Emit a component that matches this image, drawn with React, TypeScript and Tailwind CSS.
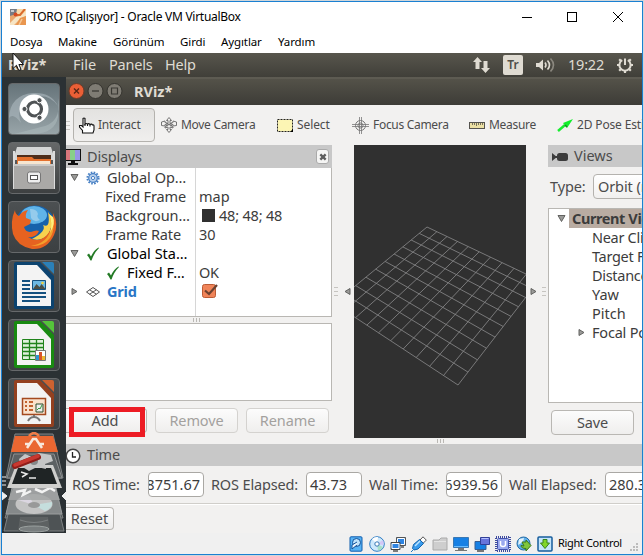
import type { ReactNode } from "react";

const UI = "font-['Noto_Sans','Open_Sans',sans-serif]";

/* ---------- small helpers ---------- */

function Label({ className = "", children }: { className?: string; children: ReactNode }) {
  return <span className={`block shrink-0 whitespace-nowrap ${className}`}>{children}</span>;
}

function PushButton({ className = "", disabled, children }: { className?: string; disabled?: boolean; children: ReactNode }) {
  return (
    <button
      className={`flex shrink-0 items-center justify-center rounded-[4px] border bg-linear-to-b from-[#fcfcfc] to-[#efeeed] text-[14.5px] ${
        disabled ? "border-[#d4d2cf] text-[#a3a19e]" : "border-[#b9b7b3] text-[#4c4c4c]"
      } ${className}`}
    >
      {children}
    </button>
  );
}

function Arrow({ dir, className = "" }: { dir: "down" | "right" | "left"; className?: string }) {
  const pts = dir === "down" ? "1,1.5 8,1.5 4.5,7.5" : dir === "right" ? "2,1.5 7,4.5 2,7.5" : "7,1.5 2,4.5 7,7.5";
  return (
    <svg width="9" height="9" viewBox="0 0 9 9" className={`shrink-0 ${className}`}>
      <polygon points={pts} fill="#9a9a98" stroke="#626260" strokeWidth="1" />
    </svg>
  );
}

function Grip({ vertical }: { vertical?: boolean }) {
  return (
    <div className={vertical ? "flex flex-col gap-[3px]" : "flex gap-[2px]"}>
      {[0, 1, 2].map((i) => (
        <span key={i} className={vertical ? "h-px w-[4px] bg-[#c6c4c0]" : "h-[4px] w-px bg-[#bab8b4]"} />
      ))}
    </div>
  );
}

/* ---------- host window ---------- */

function TitleBar() {
  return (
    <div className="flex h-[29px] shrink-0 items-center bg-white pl-[8px] text-[12px] text-black">
      <svg width="16" height="16" viewBox="0 0 16 16" className="shrink-0">
        <rect width="16" height="16" fill="#e9a76d" />
        <path d="M0 0h8L6 5 0 7z" fill="#777c84" />
        <path d="M1 1h3v2H1z" fill="#c9ccd0" />
        <path d="M7 0h9v5l-5 4-5-3z" fill="#f8d9a8" />
        <path d="M16 2 11 7 6 8 0 14v2h4l6-6 6-3z" fill="#f6e5c5" />
        <path d="M15 0 10 6H5" stroke="#db6b2c" strokeWidth="2" fill="none" />
        <circle cx="5.500" cy="5.500" r="2" fill="#d24a22" />
        <path d="M6 16l4-7 6-2v9z" fill="#e9964f" />
        <path d="M9 16l3-6" stroke="#f4c896" strokeWidth="1.500" />
      </svg>
      <Label className="ml-[5px] w-[400px] grow tracking-[-0.27px]">TORO [Çalışıyor] - Oracle VM VirtualBox</Label>
      <svg width="104" height="12" viewBox="0 0 104 12" className="mr-[17px] shrink-0" fill="none" stroke="#000" strokeWidth="1">
        <path d="M1 6.500h10M46.500 1.500h9v9h-9z" shapeRendering="crispEdges" />
        <path d="M92 1l10 10M102 1 92 11" />
      </svg>
    </div>
  );
}

function MenuBar() {
  return (
    <div className="flex h-[22px] shrink-0 items-center bg-white pl-[8px] text-[11.5px] tracking-[-0.1px] text-black">
      <Label className="w-[48px]">Dosya</Label>
      <Label className="w-[55px]">Makine</Label>
      <Label className="w-[67px]">Görünüm</Label>
      <Label className="w-[41px]">Girdi</Label>
      <Label className="w-[57px]">Aygıtlar</Label>
      <Label>Yardım</Label>
    </div>
  );
}

function Gear() {
  return (
    <svg width="18" height="18" viewBox="0 0 18 18" fill="none" stroke="#dfdbd2" className="shrink-0">
      <path d="M6.200 4.200A5.600 5.600 0 1 0 11.800 4.200" strokeWidth="2" />
      <path d="M9 2.500v6.500" strokeWidth="2" />
      <path d="M1 9h2.500M14.500 9H17M9 14.500V17M3.200 3.200l2 2M14.800 3.200l-2 2M3.200 14.800l2-2M14.800 14.800l-2-2" strokeWidth="2.200" />
    </svg>
  );
}

function GuestPanel() {
  return (
    <div className="relative flex h-[24px] shrink-0 items-center bg-linear-to-b from-[#58564d] to-[#403f39] pl-[6px] text-[14.5px] text-[#dfdbd2]">
      <Label className="w-[65px] font-bold">RViz*</Label>
      <Label className="w-[36px]">File</Label>
      <Label className="w-[56px] tracking-[-0.2px]">Panels</Label>
      <Label className="grow tracking-[-0.2px]">Help</Label>
      <svg width="19" height="18" viewBox="0 0 19 18" className="shrink-0" fill="#dfdbd2">
        <path d="M5.500 1 10 6H7.500v7h-4V6H1z" />
        <path d="M13.500 17 18 12h-2.500V5h-4v7H9z" />
      </svg>
      <span className="ml-[12px] flex h-[20px] w-[20px] items-center justify-center rounded-[2px] bg-[#dfdbd2] text-[12px] font-semibold text-[#504e47]">Tr</span>
      <svg width="20" height="16" viewBox="0 0 20 16" className="ml-[12px] shrink-0" fill="none" stroke="#dfdbd2" strokeWidth="1.600">
        <path d="M1 6h3l4-3.500v11L4 10H1z" fill="#dfdbd2" stroke="none" />
        <path d="M10 5.500q2 2.500 0 5" />
        <path d="M12.500 3.500q4 4.500 0 9" />
        <path d="M15.500 1.500q6 6.500 0 13" stroke="#8b887f" />
      </svg>
      <Label className="ml-[13px] w-[48px] tracking-[-0.2px]">19:22</Label>
      <Gear />
      <span className="w-[8px]" />
      <svg width="14" height="20" viewBox="0 0 14 20" className="absolute top-0 left-[9px]">
        <path d="M2 0v15.500l3.500-3.200 2.300 5.200 2.300-1-2.200-5h4.600z" fill="#fff" stroke="#111" strokeWidth="1" />
      </svg>
    </div>
  );
}

/* ---------- launcher ---------- */

function Tile({ className = "from-[#4c5052] to-[#3c4042]", children }: { className?: string; children: ReactNode }) {
  return (
    <div className={`flex h-[52px] w-[52px] shrink-0 overflow-hidden rounded-[4px] border border-[#66696b] bg-linear-to-b ${className}`}>
      <svg width="50" height="50" viewBox="1 1 50 50">
        {children}
      </svg>
    </div>
  );
}

function OfficePage({ color, fold, children }: { color: string; fold: string; children: ReactNode }) {
  return (
    <>
      <path d="M8 2h24l14 14v31q0 2-2 2H8q-2 0-2-2V4q0-2 2-2z" fill={color} />
      <path d="M34 2h10q2 0 2 2v10z" fill={fold} />
      <path d="M9 5h20l14 15v26H9z" fill="#f3f3f3" />
      {children}
    </>
  );
}

function Launcher() {
  return (
    <div className="flex h-[456px] w-[64px] shrink-0 flex-col items-center gap-[7px] overflow-hidden bg-[#2b3134] pt-[6px]">
      <Tile className="from-[#66747a] to-[#98a4a8]">
        <path d="M1 35Q2 12 25 10 43 9 50 23 39 8 22 16 7 23 13 40 5 29 1 35Z" fill="#a9b6bb" opacity=".65" />
        <path d="M50 15Q54 40 33 44 18 48 6 51H26Q47 50 50 34Z" fill="#a7b3b6" opacity=".7" />
        <circle cx="26" cy="26" r="14.500" fill="#fff" />
        <circle cx="26.500" cy="26" r="7" fill="none" stroke="#4f5355" strokeWidth="3.200" />
        <g fill="#4f5355" stroke="#fff" strokeWidth="1">
          <circle cx="16.500" cy="26" r="2.600" />
          <circle cx="31.500" cy="17.300" r="2.600" />
          <circle cx="31.500" cy="34.700" r="2.600" />
        </g>
      </Tile>
      <Tile className="from-[#666869] to-[#3d4041]">
        <path d="M9 5h34l4 13H5z" fill="#d5d6d6" />
        <path d="M9 13h34v12H9z" fill="#4f2d1a" />
        <path d="M9 15h15l2 2h17v6H9z" fill="#e4702d" />
        <path d="M10 19h32v5H10z" fill="#f6e5cf" />
        <path d="M5 9h2v38H5zM45 9h2v38h-2z" fill="#dcdcdc" />
        <path d="M6 22h40v25H6z" fill="#aaa9a7" />
        <path d="M6 22h40v2H6z" fill="#c9c8c6" />
        <rect x="19.500" y="30" width="13" height="11" rx="2" fill="#eee" stroke="#777" />
        <rect x="22.500" y="33.500" width="7" height="4" fill="#fff" stroke="#555" />
      </Tile>
      <Tile>
        <circle cx="27" cy="25" r="20.500" fill="#1762ab" />
        <ellipse cx="26" cy="14" rx="13" ry="9" fill="#60b4e8" />
        <path d="M22 8q7 0 8 5-2 3 2 6-6 3-9-2z" fill="#b9dbef" opacity=".6" />
        <path d="M40 11Q47 20 41 32 35 41 24 38 39 30 35 24 43 28 40 11Z" fill="#f7d14e" />
        <path d="M7 9q0 4 4 6 3-5 9-6-3 4-2 8l5 2-1 4-6 3q2 7 10 4 3-1 5 0-3 7-11 6 10 7 19-2 7-8 6-22 6 11 1 22-7 15-22 14Q9 45 5 33 2 20 7 9z" fill="#e66220" />
        <path d="M40 11q10 13 2 26-7 9-19 8 17-3 20-18 1-8-3-16z" fill="#f3a12c" />
        <path d="M41 13q4 9 1 19 6-10 3-16z" fill="#fff07b" />
      </Tile>
      <Tile>
        <OfficePage color="#0c436f" fold="#2b80b8">
          <path d="M14 21h8M14 25h8M14 29h8M14 33h24M14 37h24M14 41h18" stroke="#15517f" strokeWidth="2" />
          <path d="M24.500 20.500h13v9h-13z" fill="#6db9e3" stroke="#15517f" />
          <path d="M25 29l3.500-5 3 3 2-3 4 5z" fill="#4b4f45" />
          <circle cx="34.500" cy="23" r="1.300" fill="#f4d13a" />
        </OfficePage>
      </Tile>
      <Tile>
        <OfficePage color="#198a11" fold="#55c33a">
          <path d="M14.500 20.500h21v20h-21z" fill="#dff1dc" stroke="#20841b" />
          <path d="M14 24.500h22M14 28.500h22M14 32.500h22M14 36.500h22M21.500 20v20M28.500 20v20" stroke="#20841b" strokeWidth="1.300" />
          <path d="M27.500 31.500h10v10h-10z" fill="#fff" stroke="#777" />
          <path d="M28 36h3v5h-3z" fill="#2e97cd" />
          <path d="M31 33h3v8h-3z" fill="#d8542a" />
          <path d="M34 37h3v4h-3z" fill="#eeb832" />
        </OfficePage>
      </Tile>
      <Tile>
        <OfficePage color="#93401f" fold="#ce6230">
          <path d="M14.500 20.500h23v16h-23z" fill="#fae1cc" stroke="#a4491f" strokeWidth="1.500" />
          <path d="M17 24h2M17 28h2M17 32h2M21 24h4M21 28h4M21 32h4" stroke="#c2622e" strokeWidth="2" />
          <path d="M28 26h7v8h-7z" fill="#eee" stroke="#2b4a2b" />
          <path d="M29 32l2-2 1 1 2-4" stroke="#379c40" fill="none" />
          <path d="M26 37v2M20 43q2-4 6-4t6 4" stroke="#777" fill="none" strokeWidth="2" />
        </OfficePage>
      </Tile>
      <svg width="64" height="103" viewBox="0 0 64 103" className="-mt-[5px] shrink-0">
        <g stroke="#7e8283">
          <path d="M13 2h38l10 44H4z" fill="#4a4e50" />
          <path d="M9 66h46l6 20H3z" fill="#53585a" />
          <path d="M9 70h46l7 29H2z" fill="#4e5355" />
        </g>
        <path d="M18 85h28l2 14H16z" fill="#5d6162" />
        <path d="M18 88q14 5 28 0" stroke="#7c8081" fill="none" />
        <ellipse cx="32" cy="97" rx="15" ry="3" fill="#787d7e" stroke="#9ba1a0" />
        <path d="M10 56h44l6 26H4z" fill="#85898a" stroke="#9a9d9e" />
        <ellipse cx="32" cy="72" rx="18.500" ry="10" fill="#c4c4c4" />
        <path d="M32 73l18-3q1 6-7 9z" fill="#c5dedd" />
        <path d="M32 73l-16-5q4-5 11-4z" fill="#dbd6e1" />
        <ellipse cx="32" cy="73" rx="6" ry="3" fill="#999" />
        <path d="M6 68h52l-5-13H12z" fill="#a2a5a5" opacity=".8" />
        <path d="M14 60l9-2-2 5 8-4M33 57l7 3 8-4 5 3" stroke="#f3f3f3" strokeWidth="2.500" fill="none" />
        <path d="M12 22h40l8 24H5z" fill="#5c6163" stroke="#8d9091" />
        <path d="M14 33h37l9 23H5z" fill="#cfcfcd" />
        <path d="M16 36h33l6 16H10z" fill="#1f2425" />
        <path d="M19 40l6 2-5 3M27 46h7" fill="none" stroke="#e8e8e8" strokeWidth="1.500" />
        <path d="M17 27l6-5 7 3 7-4 12 2 2 6-8 3 1 5-9-2-8 4-8-5z" fill="#c5c6c6" />
        <circle cx="32" cy="29" r="4" fill="#85898a" />
        <path d="M13 34l23-9" stroke="#8f1d19" strokeWidth="6" strokeLinecap="round" />
        <path d="M13 33l23-9" stroke="#c83830" strokeWidth="3.500" strokeLinecap="round" />
        <path d="M13 4h38l5 16H9z" fill="#ea6731" />
        <path d="M27 4q5-6 10 0" stroke="#f07d47" strokeWidth="2.500" fill="none" />
        <path d="M25 16l6-9h3l6 9M23 12h5M37 12h5" stroke="#f8e8dc" strokeWidth="2.500" fill="none" />
        <path d="M0 45h4M0 49h4M0 53h4M64 60l-4 4 4 4M0 60l5 4-5 4" fill="#eee" stroke="#eee" />
      </svg>
    </div>
  );
}

/* ---------- rviz ---------- */

function RvizTitle() {
  return (
    <div className="flex h-[28px] shrink-0 items-center border-t-2 border-[#5d5b52] bg-linear-to-b from-[#545249] to-[#3d3c37] pl-[2px]">
      <svg width="58" height="20" viewBox="0 0 58 20" className="shrink-0" fill="none">
        <circle cx="8.500" cy="9" r="7.500" fill="#ea5f36" stroke="#6e3a28" />
        <path d="M6 6.500l5 5M11 6.500l-5 5" stroke="#592616" strokeWidth="1.400" />
        <circle cx="27.500" cy="9" r="7.500" fill="#7f7c74" stroke="#35342f" />
        <path d="M24 9h7" stroke="#3a3934" strokeWidth="1.300" />
        <circle cx="46.500" cy="9" r="7.500" fill="#7f7c74" stroke="#35342f" />
        <path d="M43.500 6h6v6h-6z" stroke="#3a3934" strokeWidth="1.200" />
      </svg>
      <Label className="ml-[8px] text-[14.5px] font-bold text-[#dfdbd2]">RViz*</Label>
    </div>
  );
}

function MoveIcon() {
  return (
    <svg width="16" height="16" viewBox="0 0 16 16" className="shrink-0" fill="#f2f1f0" stroke="#666" strokeWidth=".9">
      <path d="M8 .5l2.500 3H9v3l3-1V4l3.500 1v3.500L12 9V7.500L9.500 8 12 10v1L9 10v2.500h1.500L8 15.500l-2.500-3H7V10l-3 1v-1l2.500-2L4 7.500V9L.5 8.500V5L4 4v1.500l3 1v-3H5.500z" />
      <path d="M5 6l6 3M11 6 5 9" />
    </svg>
  );
}

function FocusIcon() {
  return (
    <svg width="17" height="17" viewBox="0 0 17 17" className="shrink-0" fill="none" stroke="#777" strokeWidth="1">
      <circle cx="8.500" cy="8.500" r="5" />
      <circle cx="8.500" cy="8.500" r="2.500" />
      <path d="M7.500 0v17M9.500 0v17M0 7.500h17M0 9.500h17" strokeWidth=".8" />
    </svg>
  );
}

function Toolbar() {
  return (
    <div className="flex h-[40px] shrink-0 items-center overflow-hidden text-[12px] text-[#4c4c4c]">
      <Grip vertical />
      <div className="ml-[3px] flex h-[34px] w-[82px] shrink-0 items-center rounded-[4px] border border-[#b4b2ae] bg-linear-to-b from-[#e3e2e0] to-[#f0efee] pl-[4px]">
        <svg width="17" height="17" viewBox="0 0 17 17" className="shrink-0" fill="#fff" stroke="#111" strokeWidth="1.100">
          <path d="M4.500 16v-2.500L1.500 10V8.500h2L5 10V1.500q1-1 2 0V7q1-1 2.500 0 1.300-1 2.500.5 1.500-1 2.500.5 1.500-.5 1.500 1v4L15 16z" />
          <path d="M7 7v2M9.500 7v2M12 7.500v2" />
        </svg>
        <Label className="ml-[3px] tracking-[-0.2px]">Interact</Label>
      </div>
      <span className="w-[6px] shrink-0" />
      <MoveIcon />
      <Label className="ml-[4px] w-[96px] tracking-[-0.3px]">Move Camera</Label>
      <svg width="16" height="13" viewBox="0 0 16 13" className="shrink-0">
        <rect x=".5" y=".5" width="15" height="12" fill="#fcf5b4" stroke="#222" strokeDasharray="2 1" />
        <path d="M13 13l3-3v3z" />
      </svg>
      <Label className="ml-[4px] w-[55px] tracking-[-0.1px]">Select</Label>
      <FocusIcon />
      <Label className="ml-[4px] w-[96px] tracking-[-0.3px]">Focus Camera</Label>
      <svg width="16" height="7" viewBox="0 0 16 7" className="shrink-0">
        <rect x=".5" y=".5" width="15" height="6" fill="#ece0a4" stroke="#55534e" />
        <path d="M3.500 1v2M5.500 1v2M7.500 1v3M9.500 1v2M11.500 1v2M13.500 1v2" stroke="#77715a" />
      </svg>
      <Label className="ml-[4px] w-[68px] tracking-[-0.3px]">Measure</Label>
      <svg width="16" height="13" viewBox="0 0 16 13" className="shrink-0">
        <path d="M1 12l7-6" stroke="#19ec31" strokeWidth="2.500" />
        <path d="M6 4 16 0 10 9z" fill="#12ef2b" />
        <path d="M8 6l2 2" stroke="#168c25" strokeWidth="1.500" />
      </svg>
      <Label className="ml-[4px] tracking-[-0.15px]">2D Pose Estimate</Label>
    </div>
  );
}

function DisplaysHeader() {
  return (
    <div className="flex h-[23px] shrink-0 items-center bg-[#c8c8c8] text-[14.5px] text-[#4c4c4c]">
      <svg width="15" height="16" viewBox="0 0 15 16" className="shrink-0">
        <path d="M0 0h15v12H0z" fill="#111" />
        <path d="M0 1h4v10H0z" fill="#d8767c" />
        <path d="M4 1h5v10H4z" fill="#88cf88" />
        <path d="M9 1h5v10H9z" fill="#9794e5" />
        <path d="M5 12h4v2h3v2H2v-2h3z" fill="#111" />
      </svg>
      <Label className="ml-[6px] grow tracking-[-0.2px]">Displays</Label>
      <span className="mr-[3px] flex h-[15px] w-[13px] items-center justify-center rounded-[3px] border border-[#aaa] bg-[#f5f5f4]">
        <svg width="8" height="8" viewBox="0 0 9 9">
          <path d="M1.500 1.500l6 6M7.500 1.500l-6 6" stroke="#5d5d5d" strokeWidth="2.600" />
        </svg>
      </span>
    </div>
  );
}

function Check() {
  return (
    <svg width="14" height="14" viewBox="0 0 14 14" className="shrink-0">
      <path d="M1 8l2-1.500 2 3Q8 3 12.500.5L13 1Q8 6 5.500 13.500H4.500Q3 10 1 8z" fill="#237a25" />
    </svg>
  );
}

function Cog() {
  return (
    <svg width="14" height="14" viewBox="0 0 14 14" className="shrink-0" fill="none" stroke="#4880c4">
      <circle cx="7" cy="7" r="5.600" strokeWidth="2" strokeDasharray="1.600 1.330" />
      <circle cx="7" cy="7" r="4.300" strokeWidth="1.200" fill="#b7cfec" />
      <circle cx="7" cy="7" r="1.600" fill="#fff" />
    </svg>
  );
}

function DisplayTree() {
  return (
    <div className="flex h-[149px] shrink-0 border-r border-b border-[#b9b7b3] bg-white text-[14.5px] leading-[19px] text-[#3c3c3c]">
      <div className="w-[130px] shrink-0 border-r border-[#d6d6d6]">
        <div className="flex h-[19px] items-center pl-[4px]">
          <Arrow dir="down" />
          <span className="w-[7px]" />
          <Cog />
          <Label className="ml-[7px]">Global Op…</Label>
        </div>
        <Label className="h-[19px] pl-[39px] tracking-[-0.15px]">Fixed Frame</Label>
        <Label className="h-[19px] pl-[39px]">Backgroun…</Label>
        <Label className="h-[19px] pl-[39px] tracking-[-0.15px]">Frame Rate</Label>
        <div className="flex h-[19px] items-center pl-[4px] text-black">
          <Arrow dir="down" />
          <span className="w-[7px]" />
          <Check />
          <Label className="ml-[7px]">Global Sta…</Label>
        </div>
        <div className="flex h-[19px] items-center pl-[40px] text-black">
          <Check />
          <Label className="ml-[7px]">Fixed F…</Label>
        </div>
        <div className="flex h-[19px] items-center pl-[4px]">
          <Arrow dir="right" />
          <svg width="14" height="10" viewBox="0 0 14 10" className="ml-[7px] shrink-0" fill="none" stroke="#555">
            <path d="M7 .5 13.500 5 7 9.500.5 5zM3.500 2.700l7 4.600M10.500 2.700l-7 4.600" />
          </svg>
          <Label className="ml-[7px] font-bold tracking-[-0.2px] text-[#2a76c6]">Grid</Label>
        </div>
      </div>
      <div className="pt-[19px] pl-[3px]">
        <Label className="h-[19px]">map</Label>
        <div className="flex h-[19px] items-center">
          <span className="mr-[4px] ml-[3px] h-[13px] w-[13px] bg-[#303030]" />
          <Label className="tracking-[-0.2px]">48; 48; 48</Label>
        </div>
        <Label className="h-[19px]">30</Label>
        <Label className="mt-[19px] h-[19px] tracking-[-0.2px]">OK</Label>
        <svg width="17" height="17" viewBox="0 0 17 17" className="ml-[3px]">
          <rect x=".5" y="2.500" width="13" height="13" rx="2" fill="#f08459" stroke="#bb5b35" />
          <path d="M3 8.500l4 3.500L15 3" stroke="#6b4130" strokeWidth="2.200" fill="none" />
        </svg>
      </div>
    </div>
  );
}

function DisplaysDock() {
  return (
    <div className="flex w-[266px] shrink-0 flex-col">
      <DisplaysHeader />
      <DisplayTree />
      <div className="flex h-[6px] shrink-0 items-center pl-[127px]">
        <Grip />
      </div>
      <div className="h-[78px] shrink-0 border-t border-r border-b border-[#b9b7b3] bg-white" />
      <div className="relative flex gap-[8px] pt-[7px]">
        <PushButton className="h-[25px] w-[81px] rounded-l-none border-l-0 pr-[2px]">Add</PushButton>
        <PushButton disabled className="h-[25px] w-[83px] tracking-[-0.1px]">
          Remove
        </PushButton>
        <PushButton disabled className="h-[25px] w-[83px] tracking-[-0.1px]">
          Rename
        </PushButton>
        <div className="absolute top-[6px] left-[3px] h-[30px] w-[76px] border-[5px] border-[#ed1c24]" />
      </div>
    </div>
  );
}

/* Ten-by-ten ground plane, projected from the unit square on to the view's quad. */
const CORNERS = [
  [73, 82],
  [185, 135.2],
  [104, 240],
  [-20.1, 158.5],
];

function project(u: number, v: number): [number, number] {
  const [[x0, y0], [x1, y1], [x2, y2], [x3, y3]] = CORNERS;
  const dx1 = x1 - x2, dx2 = x3 - x2, sx = x0 - x1 + x2 - x3;
  const dy1 = y1 - y2, dy2 = y3 - y2, sy = y0 - y1 + y2 - y3;
  const det = dx1 * dy2 - dx2 * dy1;
  const g = (sx * dy2 - dx2 * sy) / det;
  const h = (dx1 * sy - sx * dy1) / det;
  const w = g * u + h * v + 1;
  return [((x1 - x0 + g * x1) * u + (x3 - x0 + h * x3) * v + x0) / w, ((y1 - y0 + g * y1) * u + (y3 - y0 + h * y3) * v + y0) / w];
}

function Viewport() {
  const steps = Array.from({ length: 11 }, (_, i) => i / 10);
  const line = (a: [number, number], b: [number, number]) => `M${a[0]} ${a[1]}L${b[0]} ${b[1]}`;
  const d = steps.map((t) => line(project(t, 0), project(t, 1)) + line(project(0, t), project(1, t))).join("");
  return (
    <svg width="172" height="293" viewBox="0 0 172 293" className="shrink-0 bg-[#303030]">
      <path d={d} fill="none" stroke="#858587" strokeWidth=".85" />
    </svg>
  );
}

function ViewsDock() {
  return (
    <div className="flex w-[94px] shrink-0 flex-col overflow-hidden text-[14.5px] text-[#4c4c4c]">
      <div className="flex h-[22px] shrink-0 items-center bg-[#c8c8c8] pl-[4px]">
        <svg width="17" height="10" viewBox="0 0 17 10" className="mt-[2px] shrink-0">
          <path d="M0 1l5 4-5 4zM3 4h3v2H3z" fill="#3c3c3c" />
          <rect x="5" y="1" width="11" height="8" rx="2.500" fill="#3c3c3c" />
        </svg>
        <Label className="ml-[5px]">Views</Label>
      </div>
      <div className="mt-[7px] flex h-[25px] shrink-0 items-center pl-[2px]">
        <Label className="w-[43px] tracking-[-0.1px]">Type:</Label>
        <div className="flex h-[25px] w-[80px] shrink-0 items-center rounded-[4px] border border-[#b4b2ae] bg-linear-to-b from-white to-[#f1f0ef] pl-[4px]">
          <Label className="tracking-[-0.1px]">Orbit (rviz)</Label>
        </div>
      </div>
      <div className="mt-[9px] h-[195px] shrink-0 border border-r-0 border-[#b9b7b3] bg-white leading-[19px] text-[#3c3c3c]">
        <div className="flex h-[19px] items-center pl-[8px]">
          <Arrow dir="down" />
          <Label className="ml-[3px] w-[90px] bg-[#b9aca2] pl-[3px] font-bold tracking-[-0.4px]">Current View</Label>
        </div>
        <div className="pl-[43px] tracking-[-0.3px]">
          <Label>Near Clip …</Label>
          <Label>Target Fra…</Label>
          <Label>Distance</Label>
          <Label className="tracking-normal">Yaw</Label>
          <Label className="tracking-normal">Pitch</Label>
        </div>
        <div className="flex h-[19px] items-center pl-[28px]">
          <Arrow dir="right" />
          <Label className="ml-[6px] tracking-[-0.2px]">Focal Point</Label>
        </div>
      </div>
      <PushButton className="mt-[7px] ml-[3px] h-[25px] w-[83px] tracking-[-0.1px]">Save</PushButton>
    </div>
  );
}

function Field({ className = "", children }: { className?: string; children: ReactNode }) {
  return (
    <div className={`flex h-[25px] w-[56px] shrink-0 items-center overflow-hidden rounded-[4px] border border-[#aaa8a4] bg-white text-[#3c3c3c] ${className}`}>
      <Label>{children}</Label>
    </div>
  );
}

function TimePanel() {
  return (
    <div className="flex shrink-0 flex-col text-[14.5px] text-[#4c4c4c]">
      <div className="flex h-[22px] items-center bg-[#c8c8c8]">
        <svg width="15" height="16" viewBox="0 0 15 16" className="mt-px shrink-0">
          <circle cx="7" cy="8" r="6.800" fill="#fff" stroke="#444" strokeWidth="1.500" />
          <path d="M6.500 4v5H10" fill="none" stroke="#222" strokeWidth="1.300" />
        </svg>
        <Label className="ml-[6px] tracking-[-0.1px]">Time</Label>
      </div>
      <div className="mt-[6px] flex h-[25px] items-center overflow-hidden">
        <Label className="ml-[6px] w-[76px] tracking-[-0.2px]">ROS Time:</Label>
        <Field className="justify-end pr-[3px]">8751.67</Field>
        <Label className="ml-[7px] w-[95px] tracking-[-0.15px]">ROS Elapsed:</Label>
        <Field className="pl-[3px]">43.73</Field>
        <Label className="ml-[7px] w-[77px] tracking-[-0.1px]">Wall Time:</Label>
        <Field className="justify-end pr-[3px]">6939.56</Field>
        <Label className="ml-[7px] w-[96px] tracking-[-0.15px]">Wall Elapsed:</Label>
        <Field className="pl-[3px]">280.34</Field>
      </div>
      <div className="mt-[6px] h-[2px] border-t border-[#d0ceca] bg-white" />
      <PushButton className="mt-[2px] h-[23px] w-[48px] rounded-l-none border-l-0">Reset</PushButton>
    </div>
  );
}

function Rviz() {
  return (
    <div className="flex w-[576px] shrink-0 flex-col overflow-hidden bg-[#f2f1f0]">
      <RvizTitle />
      <Toolbar />
      <div className="flex h-[293px] shrink-0">
        <DisplaysDock />
        <div className="flex w-[22px] shrink-0 items-center justify-center gap-[5px]">
          <Grip vertical />
          <Arrow dir="left" />
        </div>
        <Viewport />
        <div className="flex w-[22px] shrink-0 items-center justify-center gap-[4px]">
          <Arrow dir="right" />
          <Grip vertical />
        </div>
        <ViewsDock />
      </div>
      <div className="flex h-[6px] shrink-0 items-center pl-[371px]">
        <Grip />
      </div>
      <TimePanel />
    </div>
  );
}

/* ---------- status bar ---------- */

function StatusIcon({ children }: { children: ReactNode }) {
  return (
    <svg width="16" height="16" viewBox="0 0 16 16" className="shrink-0">
      {children}
    </svg>
  );
}

function StatusBar() {
  return (
    <div className="flex h-[21px] shrink-0 items-center gap-[5px] bg-[#f0f0f0] pl-[346px] text-[11px] text-black">
      <StatusIcon>
        <rect x="2" y=".8" width="12" height="14.400" rx="1" fill="#57b3f5" stroke="#0f5cad" />
        <circle cx="8.500" cy="6.500" r="4" fill="#bfe3fb" stroke="#0f4f99" />
        <path d="M9 6 4 9v4l5-4" fill="#e9f5fd" stroke="#0f4f99" />
      </StatusIcon>
      <StatusIcon>
        <circle cx="8" cy="8" r="7.300" fill="#cde8fb" stroke="#2f7dc4" />
        <path d="M8 8 3 3q3-2.500 6-2z" fill="#fff" />
        <path d="M8 8l6 3q-1 3-5 3.500z" fill="#a7dfc8" />
        <path d="M8 8l6-4q1 3 .5 5z" fill="#d4c6f5" />
        <circle cx="8" cy="8" r="2.200" fill="#fff" stroke="#3678b5" />
      </StatusIcon>
      <StatusIcon>
        <path d="M6.500 1.500h9v8h-9z" fill="#2e84e2" stroke="#555" />
        <path d="M7.500 2.500h7v6h-7z" fill="none" stroke="#fff" />
        <path d="M1 6.500h9v7H1z" fill="#2e84e2" stroke="#444" />
        <path d="M2 7.500h7v5H2z" fill="none" stroke="#fff" />
        <path d="M3 15h5M11 11h3" stroke="#555" strokeWidth="1.500" />
      </StatusIcon>
      <StatusIcon>
        <path d="M12 .8l3.300 3.300-3 3L9 4z" fill="#fff" stroke="#555" />
        <path d="M8.500 3.500l4 4L7 13l-4 1-1.500-1.500 1-4z" fill="#399bed" stroke="#1264ae" />
        <path d="M4 10l5-5" stroke="#bce3ff" strokeWidth="1.500" />
        <path d="M0 16l3-3" stroke="#2277bd" />
      </StatusIcon>
      <StatusIcon>
        <path d="M1 14V4h6l2-2h6v12z" fill="#cecece" stroke="#aaa" />
        <path d="M2 5.500h12" stroke="#e4e4e4" />
      </StatusIcon>
      <StatusIcon>
        <path d="M.5 1.500h15v10H.5z" fill="#1680e4" stroke="#3a78b3" />
        <path d="M1 10.500h14" stroke="#67bcff" />
        <path d="M5 12h6v2h3v1H2v-1h3z" fill="#777" />
      </StatusIcon>
      <StatusIcon>
        <path d="M1 5.500h11v8H1z" fill="#1680e4" stroke="#345e94" />
        <path d="M6.500 1.500h9v7h-9z" fill="#6874db" stroke="#313f96" />
        <path d="M7.500 2.500h7" stroke="#b6c0ff" />
        <path d="M3 15h7" stroke="#777" strokeWidth="2" />
      </StatusIcon>
      <StatusIcon>
        <rect x="1" y="1" width="14" height="14" fill="none" stroke="#3e4b9d" strokeDasharray="1 1" strokeWidth="2" />
        <rect x="2.500" y="2.500" width="11" height="11" rx="1" fill="#9aa9ee" stroke="#4353ae" />
        <path d="M5.500 5v3.500q0 2 2.500 2t2.500-2V5" fill="none" stroke="#fff" strokeWidth="1.500" />
      </StatusIcon>
      <StatusIcon>
        <circle cx="7.500" cy="7.500" r="6.500" fill="#5eb0ec" stroke="#256aa4" />
        <path d="M3 3l5-1-1 4-5 3z" fill="#e3f1f9" />
        <path d="M6 6h4V4l5 5.500-5 5.500v-2.500q-5 0-5-3l3 .5z" fill="#80c63c" stroke="#38771d" />
      </StatusIcon>
      <StatusIcon>
        <rect x="1" y="1" width="14" height="14" rx="1" fill="#c5e5fb" stroke="#165c9c" strokeWidth="1.500" />
        <path d="M6 3.500h4V7h2.500L8 12.500 3.500 7H6z" fill="#80d52a" stroke="#37831c" />
      </StatusIcon>
      <Label className="grow tracking-[-0.35px]">Right Control</Label>
      <svg width="9" height="9" viewBox="0 0 9 9" className="mt-[8px] mr-[3px] shrink-0" fill="#bcbcbc">
        <path d="M6 0h2v2H6zM3 3h2v2H3zM6 3h2v2H6zM0 6h2v2H0zM3 6h2v2H3zM6 6h2v2H6z" />
      </svg>
    </div>
  );
}

export default function App() {
  return (
    <div className={`h-[556px] w-[644px] overflow-hidden bg-[#d0d6da] p-px ${UI}`}>
      <div className="flex h-[554px] w-[642px] flex-col border border-[#1a80d2] bg-[#f0f0f0]">
        <TitleBar />
        <MenuBar />
        <GuestPanel />
        <div className="flex h-[456px] shrink-0">
          <Launcher />
          <Rviz />
        </div>
        <StatusBar />
      </div>
    </div>
  );
}
